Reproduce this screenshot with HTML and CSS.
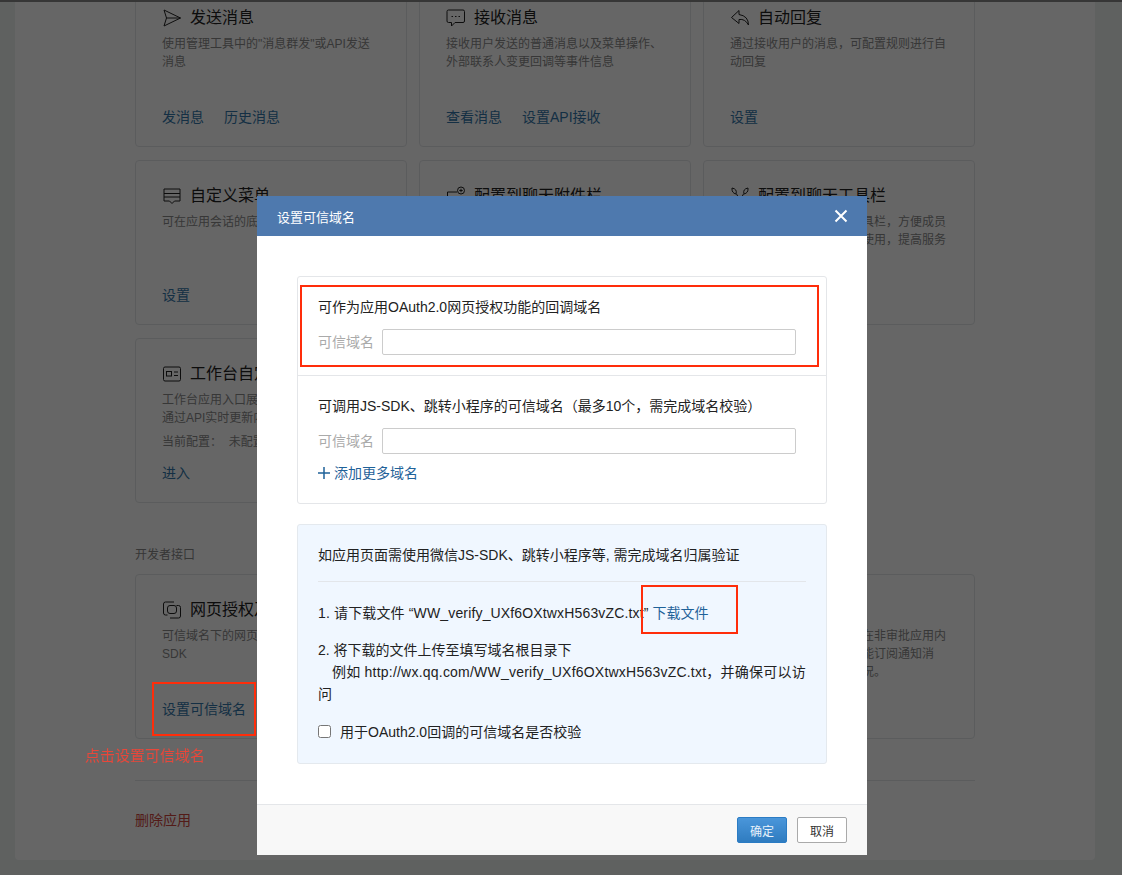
FILE: index.html
```html
<!DOCTYPE html>
<html lang="zh-CN">
<head>
<meta charset="utf-8">
<title>设置可信域名</title>
<link rel="stylesheet" href="styles.css">
</head>
<body>
<div class="topbar"></div>
<main class="panel">
  <div class="grid first">
    <section class="card">
      <h3 class="card-title"><svg class="icon" viewBox="0 0 20 20"><path d="M2 2 L18.500 10 L2 18 L4.500 10 Z M4.500 10 H18.500"/></svg>发送消息</h3>
      <p class="desc">使用管理工具中的"消息群发"或API发送<br>消息</p>
      <div class="links"><a>发消息</a><a>历史消息</a></div>
    </section>
    <section class="card">
      <h3 class="card-title"><svg class="icon" viewBox="0 0 20 20"><path d="M2.500 2 H17 Q18.500 2 18.500 3.500 V13 Q18.500 14.500 17 14.500 H9 L5.500 18 V14.500 H2.500 Q1 14.500 1 13 V3.500 Q1 2 2.500 2 Z"/><path class="dots" d="M5.500 8.500 h1.500 M9 8.500 h1.500 M12.500 8.500 h1.500"/></svg>接收消息</h3>
      <p class="desc">接收用户发送的普通消息以及菜单操作、<br>外部联系人变更回调等事件信息</p>
      <div class="links"><a>查看消息</a><a>设置API接收</a></div>
    </section>
    <section class="card">
      <h3 class="card-title"><svg class="icon" viewBox="0 0 20 20"><path d="M9 2.500 L1.500 9.500 L9 15.500 V11.500 Q15 10.500 18.500 17 Q18.500 8 9 6.500 Z"/></svg>自动回复</h3>
      <p class="desc">通过接收用户的消息，可配置规则进行自<br>动回复</p>
      <div class="links"><a>设置</a></div>
    </section>
    <section class="card">
      <h3 class="card-title"><svg class="icon" viewBox="0 0 20 20"><path d="M2 3 H18 V15 H12.500 L10 17.500 L7.500 15 H2 Z M2 7.500 H18 M2 11 H18"/></svg>自定义菜单</h3>
      <p class="desc">可在应用会话的底部配置自定义菜单</p>
      <div class="links"><a>设置</a></div>
    </section>
    <section class="card">
      <h3 class="card-title"><svg class="icon" viewBox="0 0 20 20"><path d="M11 6 H1.500 V16 H5 V18.500 L8 16 H17 V11"/><circle cx="15" cy="4.500" r="3.500"/><path d="M15 2.800 V6.200 M13.300 4.500 H16.700 M5 11.500 h1 M8.500 11.500 h1 M12 11.500 h1"/></svg>配置到聊天附件栏</h3>
      <p class="desc">将应用配置到聊天附件栏，方便成员使用</p>
      <div class="links"><a>设置</a></div>
    </section>
    <section class="card">
      <h3 class="card-title"><svg class="icon" viewBox="0 0 20 20"><path d="M2 2 Q1.500 7 6 8 Q7.500 3 2 2 Z M18 2 Q18.500 7 14 8 Q12.500 3 18 2 Z M6.500 8 L12 17.500 M13.500 8 L8 17.500"/></svg>配置到聊天工具栏</h3>
      <p class="desc">可以将应用配置到聊天工具栏，方便成员<br>在聊天过程中快捷找到并使用，提高服务</p>
      <div class="links"><a>设置</a></div>
    </section>
    <section class="card">
      <h3 class="card-title"><svg class="icon" viewBox="0 0 20 20"><rect x="1.500" y="3" width="17" height="14" rx="1.500"/><rect x="4.500" y="7.500" width="5" height="4.500"/><path d="M12 8 H16 M12 11.500 H16"/></svg>工作台自定义展示</h3>
      <p class="desc">工作台应用入口展示样式可自定义，<br>通过API实时更新内容</p>
      <p class="desc config">当前配置：&nbsp;&nbsp;未配置</p>
      <div class="links"><a>进入</a></div>
    </section>
  </div>

  <h4 class="section-label">开发者接口</h4>
  <div class="grid">
    <section class="card">
      <h3 class="card-title"><svg class="icon" viewBox="0 0 20 20"><path d="M5.500 15 H3.500 Q1.500 15 1.500 13 V4 Q1.500 2 3.500 2 H12"/><rect x="5.500" y="5.500" width="9" height="8" rx="2.500"/><path d="M14.500 5.500 H16.500 Q18.500 5.500 18.500 7.500 V16 Q18.500 18 16.500 18 H8"/></svg>网页授权及JS-SDK</h3>
      <p class="desc">可信域名下的网页可使用企业微信JS-<br>SDK</p>
      <div class="links"><a>设置可信域名</a></div>
    </section>
    <section class="card">
      <h3 class="card-title">企业微信授权登录</h3>
      <p class="desc">可使用企业微信账号登录网站</p>
      <div class="links"><a>设置</a></div>
    </section>
    <section class="card">
      <h3 class="card-title">审批</h3>
      <p class="desc">可调用审批接口发起审批在非审批应用内<br>使用审批流程，审批结果能订阅通知消<br>息，可以及时获知审批情况。</p>
    </section>
  </div>

  <hr class="rule">
  <a class="danger">删除应用</a>
</main>

<div class="mask">
  <div class="note-box note-box-link"></div>
  <p class="note-text">点击设置可信域名</p>

  <div class="dialog" role="dialog">
    <header class="dialog-head">
      <span>设置可信域名</span>
      <svg class="close" viewBox="0 0 14 14"><path d="M1.500 1.500 L12.500 12.500 M12.500 1.500 L1.500 12.500"/></svg>
    </header>
    <div class="dialog-body">
      <div class="domains">
        <div class="domain-sec">
          <p class="sec-title">可作为应用OAuth2.0网页授权功能的回调域名</p>
          <label class="field"><span>可信域名</span><input type="text"></label>
          <div class="mark mark-oauth"></div>
        </div>
        <div class="domain-sec second">
          <p class="sec-title">可调用JS-SDK、跳转小程序的可信域名（最多10个，需完成域名校验）</p>
          <label class="field"><span>可信域名</span><input type="text"></label>
          <a class="add"><svg viewBox="0 0 12 12"><path d="M6 0 V12 M0 6 H12"/></svg>添加更多域名</a>
        </div>
      </div>
      <div class="verify">
        <p class="verify-title">如应用页面需使用微信JS-SDK、跳转小程序等, 需完成域名归属验证</p>
        <ol class="steps">
          <li class="step-one"><span class="spaced">1. 请下载文件 “WW_verify_UXf6OXtwxH563vZC.txt”</span> <a>下载文件</a><div class="mark mark-file"></div></li>
          <li>2. 将下载的文件上传至填写域名根目录下<br><span class="indent">例如 http://wx.qq.com/WW_verify_UXf6OXtwxH563vZC.txt，并确保可以访问</span></li>
        </ol>
        <label class="check"><input type="checkbox"><span>用于OAuth2.0回调的可信域名是否校验</span></label>
      </div>
    </div>
    <footer class="dialog-foot">
      <button class="btn primary">确定</button>
      <button class="btn">取消</button>
    </footer>
  </div>
</div>
</body>
</html>
```

FILE: styles.css
```css
* { box-sizing: border-box; }
html, body { margin: 0; height: 875px; overflow: hidden; }
body {
  background: #eef2f0;
  font-family: "Liberation Sans", "Noto Sans CJK SC", sans-serif;
  color: #222;
}
p, h3, h4, ol { margin: 0; padding: 0; font-weight: normal; }
ol { list-style: none; }

.topbar { height: 2px; background: #888; }

.panel {
  width: 1080px;
  height: 858px;
  margin: 0 15px;
  padding: 0 120px;
  background: #fff;
  border-radius: 0 0 4px 4px;
  overflow: hidden;
}
.grid {
  display: grid;
  grid-template-columns: repeat(3, 272px);
  grid-auto-rows: 165px;
  column-gap: 12px;
  row-gap: 13px;
}
.grid.first { margin-top: -20px; }
.card {
  border: 1px solid #e4e6e9;
  border-radius: 4px;
  padding: 26px 26px 0 26px;
  position: relative;
}
.card-title {
  display: flex;
  align-items: center;
  height: 18px;
  font-size: 16px;
  line-height: 18px;
  color: #222;
  white-space: nowrap;
}
.icon {
  width: 20px;
  height: 20px;
  margin-right: 8px;
  flex: none;
  fill: none;
  stroke: #222;
  stroke-width: 1;
}
.desc {
  margin-top: 8px;
  font-size: 12px;
  line-height: 18px;
  color: #8a8a8a;
  white-space: nowrap;
}
.config { margin-top: 6px; }
.links {
  position: absolute;
  left: 26px;
  top: 124px;
  display: flex;
  gap: 20px;
  font-size: 14px;
  line-height: 20px;
  color: #3377aa;
}
.section-label {
  margin: 43px 0 10px;
  font-size: 12px;
  line-height: 18px;
  color: #888;
}
.rule { margin: 41px 0 29px; border: 0; border-top: 1px solid #e4e6e9; }
.danger { display: block; font-size: 14px; line-height: 20px; color: #d0443c; }

.mask { position: fixed; inset: 0; background: rgba(0, 0, 0, .6); }
.note-box { position: absolute; border: 2px solid #ff2d0a; }
.note-box-link { left: 152px; top: 682px; width: 104px; height: 54px; }
.note-text {
  position: absolute;
  left: 85px;
  top: 746px;
  font-size: 15px;
  line-height: 20px;
  color: #e8473a;
}

.dialog {
  position: absolute;
  left: 257px;
  top: 196px;
  width: 610px;
  height: 659px;
  background: #fff;
  display: flex;
  flex-direction: column;
}
.dialog-head {
  flex: none;
  height: 40px;
  padding: 0 19px 0 20px;
  display: flex;
  align-items: center;
  justify-content: space-between;
  background: #4e79ae;
  color: #fff;
  font-size: 13px;
}
.close { width: 14px; height: 14px; fill: none; stroke: #fff; stroke-width: 2; }
.dialog-body { flex: 1; padding: 40px 40px 0; font-size: 14px; line-height: 22px; color: #222; }
.domains { border: 1px solid #e4e6e9; border-radius: 3px; height: 228px; }
.domain-sec { position: relative; height: 98px; padding: 19px 20px 0; }
.domain-sec.second { height: 128px; border-top: 1px solid #e4e6e9; }
.sec-title { line-height: 22px; white-space: nowrap; }
.field { display: flex; align-items: center; margin-top: 11px; color: #aaa; }
.field span { width: 64px; flex: none; }
.field input {
  width: 414px;
  height: 26px;
  border: 1px solid #ccc;
  border-radius: 2px;
  background: #fff;
  margin: 0;
  padding: 0 6px;
}
.add {
  display: flex;
  align-items: center;
  margin-top: 8px;
  color: #1f6299;
}
.add svg { width: 12px; height: 12px; margin-right: 4px; fill: none; stroke: #1f6299; stroke-width: 1.500; }
.mark { position: absolute; border: 2px solid #ff2d0a; }
.mark-oauth { left: 2px; top: 8px; width: 519px; height: 82px; }

.verify {
  margin-top: 20px;
  height: 240px;
  padding: 19px 20px 0;
  background: #f0f7ff;
  border: 1px solid #e4e9ee;
  border-radius: 3px;
}
.verify-title {
  padding-bottom: 15px;
  border-bottom: 1px solid #e3e6ea;
  white-space: nowrap;
}
.steps { margin-top: 20px; }
.steps li + li { margin-top: 15px; }
.step-one { position: relative; white-space: nowrap; }
.step-one a { color: #1f6299; }
.spaced { letter-spacing: .15px; }
.mark-file { left: 323px; top: -17px; width: 97px; height: 49px; }
.indent { text-indent: 14px; display: block; letter-spacing: .22px; }
.check { display: flex; align-items: center; margin-top: 16px; }
.check input { width: 13px; height: 13px; margin: -2px 9px 0 0; }

.dialog-foot {
  flex: none;
  height: 51px;
  padding: 12px 20px 0 0;
  display: flex;
  justify-content: flex-end;
  gap: 10px;
  background: #f8f8f8;
  border-top: 1px solid #e4e6e9;
}
.btn {
  width: 50px;
  height: 26px;
  padding: 0;
  border: 1px solid #aaa;
  border-radius: 2px;
  background: #fff;
  color: #333;
  font: 12px "Liberation Sans", "Noto Sans CJK SC", sans-serif;
}
.btn.primary {
  border-color: #2b7cc4;
  background: linear-gradient(#4a96da, #2f7cc0);
  color: #e8f2fb;
}
```
